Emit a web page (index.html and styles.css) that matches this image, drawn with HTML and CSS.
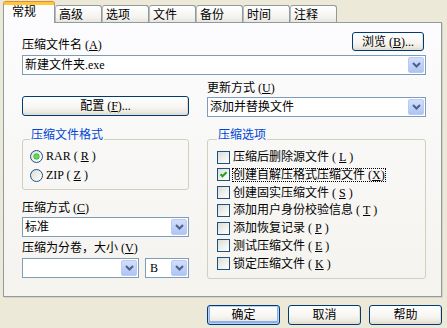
FILE: index.html
```html
<!DOCTYPE html>
<html lang="zh-CN">
  <head>
    <meta charset="UTF-8" />
    <meta name="viewport" content="width=device-width, initial-scale=1.0" />
    <title>压缩文件名和参数</title>
    <link rel="stylesheet" href="styles.css">
  </head>
  <body>
    <div class="dialog">
      <div class="tabs">
        <div class="tab active">常规</div>
        <div class="tab">高级</div>
        <div class="tab">选项</div>
        <div class="tab">文件</div>
        <div class="tab">备份</div>
        <div class="tab">时间</div>
        <div class="tab">注释</div>
      </div>

      <div class="panel">
        <div class="name-head">
          <div class="label">压缩文件名 (<u>A</u>)</div>
          <button class="btn browse">浏览 (<u>B</u>)...</button>
        </div>
        <div class="combo name-combo">
          <span class="value">新建文件夹.exe</span>
          <span class="drop"><svg width="9" height="6" viewBox="0 0 9 6"><polyline points="1,1 4.5,4.5 8,1" /></svg></span>
        </div>

        <div class="columns">
          <div class="col">
            <button class="btn config">配置 (<u>F</u>)...</button>

            <fieldset class="group format">
              <legend>压缩文件格式</legend>
              <div class="opt"><span class="radio on"></span>RAR (<u>R</u>)</div>
              <div class="opt"><span class="radio"></span>ZIP (<u>Z</u>)</div>
            </fieldset>

            <div class="label method-label">压缩方式 (<u>C</u>)</div>
            <div class="combo method-combo">
              <span class="value">标准</span>
              <span class="drop"><svg width="9" height="6" viewBox="0 0 9 6"><polyline points="1,1 4.5,4.5 8,1" /></svg></span>
            </div>

            <div class="label split-label">压缩为分卷，大小 (<u>V</u>)</div>
            <div class="split">
              <div class="combo size">
                <span class="value"></span>
                <span class="drop"><svg width="9" height="6" viewBox="0 0 9 6"><polyline points="1,1 4.5,4.5 8,1" /></svg></span>
              </div>
              <div class="combo unit">
                <span class="value">B</span>
                <span class="drop"><svg width="9" height="6" viewBox="0 0 9 6"><polyline points="1,1 4.5,4.5 8,1" /></svg></span>
              </div>
            </div>
          </div>

          <div class="col">
            <div class="label update-label">更新方式 (<u>U</u>)</div>
            <div class="combo update-combo">
              <span class="value">添加并替换文件</span>
              <span class="drop"><svg width="9" height="6" viewBox="0 0 9 6"><polyline points="1,1 4.5,4.5 8,1" /></svg></span>
            </div>

            <fieldset class="group options">
              <legend>压缩选项</legend>
              <div class="opt"><span class="check"></span>压缩后删除源文件 (<u>L</u>)</div>
              <div class="opt"><span class="check on"><svg width="9" height="9" viewBox="0 0 9 9"><polyline points="1.5,4.2 3.5,6.3 7.5,2.2" /></svg></span><span class="focus">创建自解压格式压缩文件 (<u>X</u>)</span></div>
              <div class="opt"><span class="check"></span>创建固实压缩文件 (<u>S</u>)</div>
              <div class="opt"><span class="check"></span>添加用户身份校验信息 (<u>T</u>)</div>
              <div class="opt"><span class="check"></span>添加恢复记录 (<u>P</u>)</div>
              <div class="opt"><span class="check"></span>测试压缩文件 (<u>E</u>)</div>
              <div class="opt"><span class="check"></span>锁定压缩文件 (<u>K</u>)</div>
            </fieldset>
          </div>
        </div>
      </div>

      <div class="actions">
        <button class="btn default">确定</button>
        <button class="btn">取消</button>
        <button class="btn">帮助</button>
      </div>
    </div>
  </body>
</html>
```

FILE: styles.css
```css
:root {
  --face: #ece9d8;
  --tab-border: #919b9c;
  --combo-border: #7f9db9;
  --group-border: #d0d0bf;
  --group-text: #0046d5;
  --box-border: #1c5180;
}

* {
  box-sizing: border-box;
  margin: 0;
  padding: 0;
}

body {
  background: var(--face);
  font-family: "Liberation Serif", "Noto Sans CJK SC", serif;
  font-size: 12px;
  line-height: 12px;
  color: #000;
}

.dialog {
  width: 447px;
  height: 328px;
}

/* tabs */
.tabs {
  display: flex;
  align-items: flex-end;
  height: 22px;
  padding-left: 3px;
}

.tab {
  width: 47px;
  height: 17px;
  padding: 3px 0 0 3px;
  border: 1px solid var(--tab-border);
  border-bottom: none;
  border-left-color: #b5bcbd;
  border-radius: 3px 3px 0 0;
  background: linear-gradient(#ffffff, #f4f3ef 70%, #e6e5de);
}

.tab.active {
  position: relative;
  z-index: 1;
  width: 52px;
  height: 21px;
  margin-bottom: -1px;
  padding: 1px 0 0 8px;
  border-top: 3px solid #ffc83c;
  border-left-color: var(--tab-border);
  background: #fcfcfe;
  box-shadow: 0 -1px 0 #e68b2c;
}

/* page */
.panel {
  width: 439px;
  height: 275px;
  margin-left: 3px;
  padding: 9px 15px 0 18px;
  border: 1px solid var(--tab-border);
  background: linear-gradient(#fcfcfe, #f4f3ee);
  box-shadow: 1px 1px 0 #d6d3c6;
}

.label {
  white-space: nowrap;
}

.name-head {
  display: flex;
  justify-content: space-between;
  align-items: flex-end;
}

.columns {
  display: grid;
  grid-template-columns: 167px 219px;
  column-gap: 18px;
}

.col {
  display: flex;
  flex-direction: column;
  align-items: stretch;
}

/* buttons */
.btn {
  font: inherit;
  line-height: 12px;
  color: #000;
  height: 20px;
  border: 1px solid #003c74;
  border-radius: 3px;
  background: linear-gradient(#ffffff, #f7f6f2 55%, #ebe9e0 85%, #d8d4c8);
  box-shadow: inset -1px -1px 0 #e3e0d3;
  white-space: nowrap;
}

.browse {
  width: 72px;
  height: 19px;
  margin-right: 2px;
}

.config {
  margin-top: 21px;
}

.btn.default {
  box-shadow: inset 0 0 0 1px #b8d2f5, inset 0 -1px 0 2px #8eaeed;
}

/* combo boxes */
.combo {
  display: flex;
  align-items: center;
  height: 20px;
  border: 1px solid var(--combo-border);
  background: #fff;
}

.combo .value {
  flex: 1;
  padding-left: 2px;
  line-height: 18px;
  white-space: nowrap;
}

.combo .drop {
  display: flex;
  align-items: center;
  justify-content: center;
  flex: none;
  width: 16px;
  height: 16px;
  margin: 1px;
  border: 1px solid #b9cbf3;
  border-radius: 2px;
  background: linear-gradient(#d2defc, #bccff9 60%, #b0c4f4);
}

.combo .drop polyline {
  fill: none;
  stroke: #4d6185;
  stroke-width: 2;
}

.name-combo {
  margin-top: 4px;
}

.update-label {
  margin-top: 7px;
}

.update-combo,
.method-combo {
  margin-top: 3px;
}

.method-label {
  margin-top: 12px;
}

.split-label {
  margin-top: 5px;
}

.split {
  display: flex;
  gap: 6px;
  margin-top: 4px;
}

.size {
  width: 117px;
}

.unit {
  width: 44px;
}

.unit .value {
  padding-left: 4px;
}

/* group boxes */
.group {
  margin-top: 13px;
  min-width: 0;
  border: 1px solid var(--group-border);
  border-radius: 3px;
  padding: 0 6px 7px 7px;
}

.group legend {
  padding: 0 1px 8px;
  line-height: 12px;
  color: var(--group-text);
}

.format {
  display: flex;
  flex-direction: column;
  gap: 5px;
}

.options {
  margin-top: 12px;
  padding: 1px 6px 7px 9px;
}

.opt {
  display: flex;
  align-items: center;
  gap: 3px;
  height: 14px;
  white-space: nowrap;
}

.options .opt + .opt {
  margin-top: 3.8px;
}

.radio,
.check {
  flex: none;
  display: flex;
  align-items: center;
  justify-content: center;
  width: 13px;
  height: 13px;
  border: 1px solid var(--box-border);
  background: linear-gradient(135deg, #dcdcd7, #f2f2ef 60%, #ffffff);
}

.radio {
  border-radius: 50%;
}

.radio.on {
  background: radial-gradient(circle, #5fd85b 0 2px, #24a024 2.6px, transparent 3.4px),
    linear-gradient(135deg, #dcdcd7, #f2f2ef 60%, #ffffff);
}

.check polyline {
  fill: none;
  stroke: #21a121;
  stroke-width: 2;
}

.focus {
  outline: 1px dotted #000;
  outline-offset: 0;
}

/* bottom buttons */
.actions {
  display: flex;
  justify-content: flex-end;
  gap: 8px;
  margin-top: 8px;
  padding-right: 5px;
}

.actions .btn {
  width: 73px;
}
```
